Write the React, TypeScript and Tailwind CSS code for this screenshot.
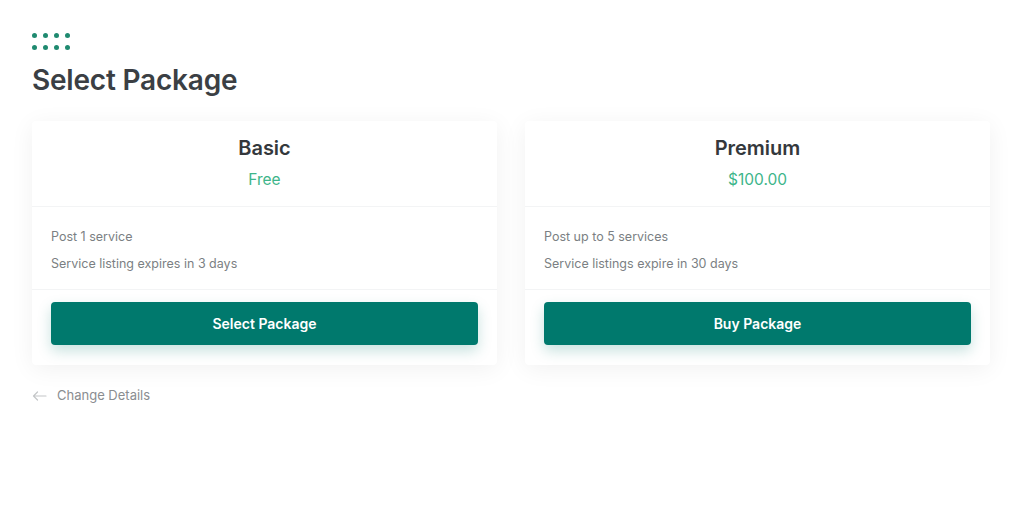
const packages = [
  {
    name: "Basic",
    price: "Free",
    features: ["Post 1 service", "Service listing expires in 3 days"],
    action: "Select Package",
  },
  {
    name: "Premium",
    price: "$100.00",
    features: ["Post up to 5 services", "Service listings expire in 30 days"],
    action: "Buy Package",
  },
];

const Dots = () => (
  <div className="grid grid-cols-4 gap-x-[6px] gap-y-[7px] w-fit">
    {Array.from({ length: 8 }).map((_, i) => (
      <span key={i} className="w-[5px] h-[5px] rounded-full bg-[#1f8a70]" />
    ))}
  </div>
);

const App = () => {
  return (
    <main
      className="min-h-screen w-full bg-white pt-[33px] px-[32px]"
      style={{ fontFamily: "Inter, 'Noto Sans', sans-serif" }}
    >
      <Dots />
      <h1 className="mt-[13px] text-[28px] leading-[34px] font-semibold text-[#3b3f44] tracking-[-0.2px]">
        Select Package
      </h1>

      <div className="mt-[24px] grid grid-cols-2 gap-[28px] w-[958px]">
        {packages.map((p) => (
          <div
            key={p.name}
            className="bg-white rounded shadow-[0_4px_24px_rgba(0,0,0,0.06)]"
          >
            <div className="flex flex-col items-center pt-[13px] pb-[16px] border-b border-[#f3f4f5]">
              <h2 className="text-[20px] leading-[28px] font-semibold text-[#34383c]">
                {p.name}
              </h2>
              <p className="mt-[8px] text-[15.5px] leading-[20px] text-[#3db58a]">
                {p.price}
              </p>
            </div>
            <ul className="px-[19px] pt-[21px] pb-[16px] flex flex-col gap-[9px] border-b border-[#f3f4f5]">
              {p.features.map((f) => (
                <li key={f} className="text-[12.5px] leading-[18px] text-[#7b7f83]">
                  {f}
                </li>
              ))}
            </ul>
            <div className="px-[19px] pt-[12px] pb-[20px]">
              <button className="w-full h-[43px] rounded-[4px] bg-[#00796d] text-white text-[14px] font-semibold shadow-[0_6px_14px_rgba(0,121,109,0.22)]">
                {p.action}
              </button>
            </div>
          </div>
        ))}
      </div>

      <button className="mt-[21px] flex items-center gap-[10px] text-[13px] text-[#8a8d90]">
        <svg width="15" height="10" viewBox="0 0 15 10" fill="none" stroke="#c4c6c8" strokeWidth="1.2">
          <path d="M14 5H1.5M5.5 1L1.5 5l4 4" strokeLinecap="round" strokeLinejoin="round" />
        </svg>
        Change Details
      </button>
    </main>
  );
};

export default App;
